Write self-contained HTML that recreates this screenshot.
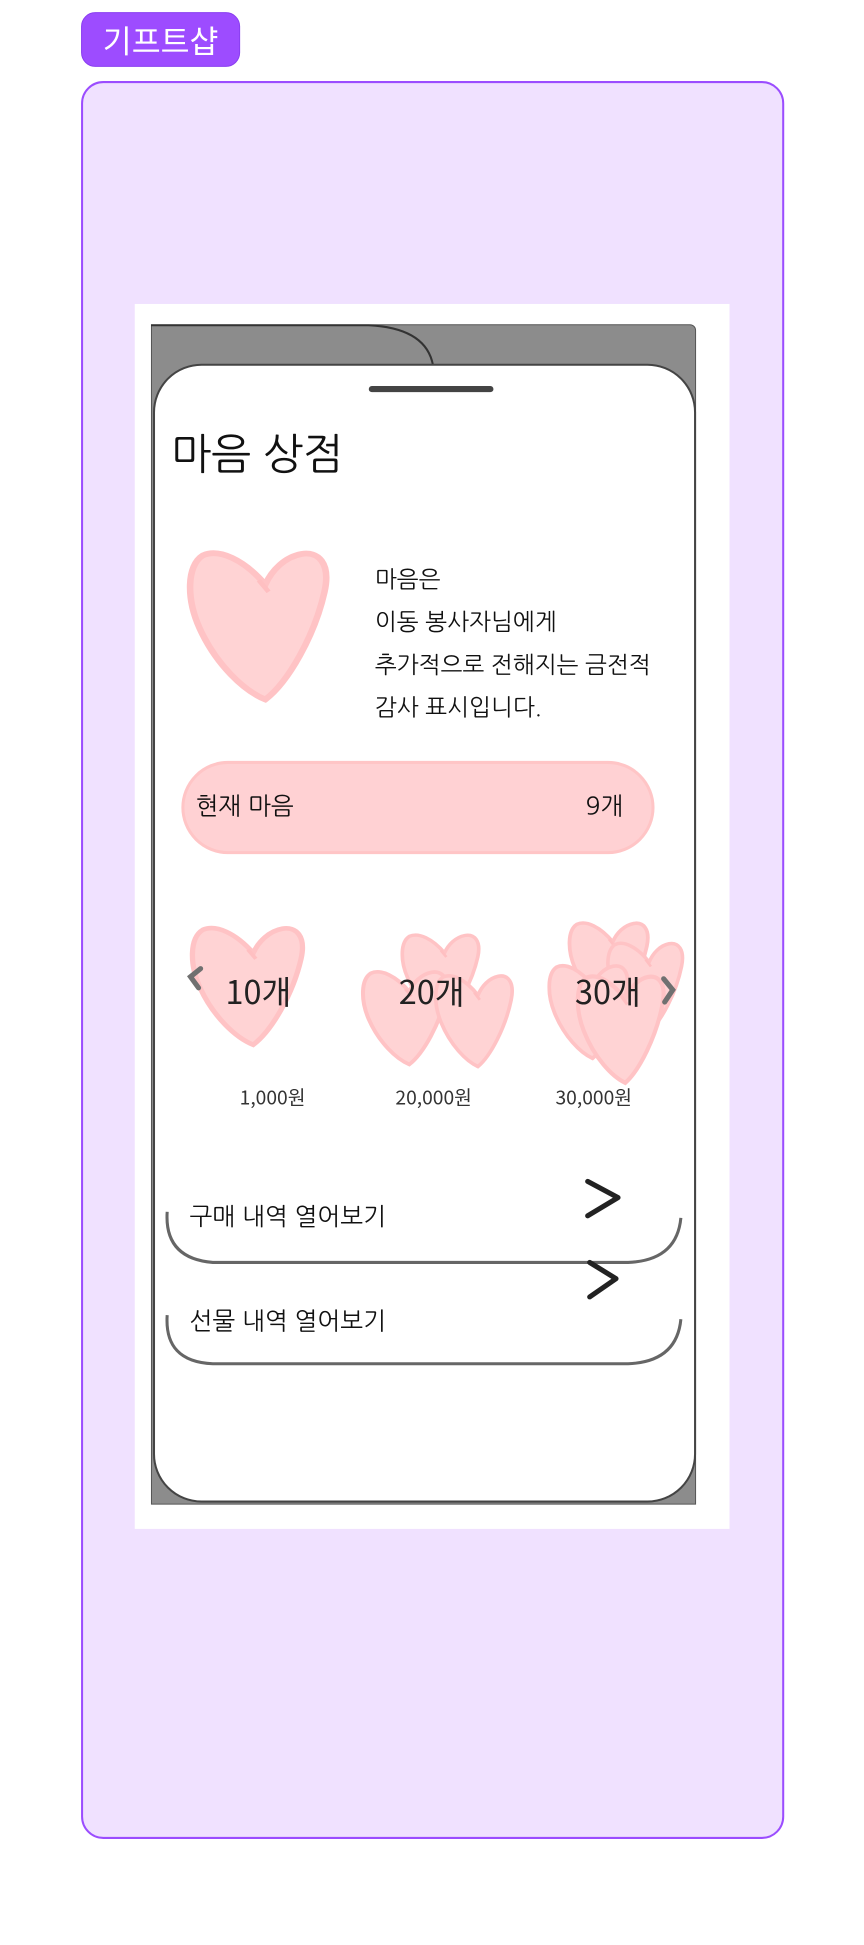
<!DOCTYPE html>
<html><head><meta charset="utf-8"><style>
*{margin:0;padding:0;box-sizing:border-box}
body{width:864px;height:1920px;background:#fff;position:relative;overflow:hidden;font-family:"Liberation Sans","Noto Sans CJK KR",sans-serif}
#w{position:absolute;left:0;top:0;width:864px;height:1920px;transform:scale(1.0132);transform-origin:0 0}
.a{position:absolute}
.hw{font-family:"NanumGothic","Noto Sans CJK KR",sans-serif;color:#111;font-weight:300}
</style></head><body>
<svg width="0" height="0" style="position:absolute"><defs>
<symbol id="h" viewBox="0 0 90 110"><path d="M48 25 C35 8 20 0 10 5 C0 12 0 35 8 55 C18 80 35 98 48 104 C62 92 78 60 84 30 C88 10 80 2 70 4 C60 6 52 15 48 25 Z" fill="#ffd3d4" stroke="#ffc3c5" stroke-width="4"/><path d="M44 22 L50 30" stroke="#ffbfc1" stroke-width="3"/></symbol>
</defs></svg>
<div id="w">
<div class="a" style="left:80px;top:12px;width:157px;height:54px;background:#9d4cff;border:1px solid #8a3ef0;border-radius:14px;color:#fff;font-size:31px;line-height:52px;text-align:center;font-family:'Noto Sans CJK KR',sans-serif">기프트샵</div>

<div class="a" style="left:80px;top:80px;width:694px;height:1735px;background:#f0e1ff;border:2px solid #9b4dff;border-radius:22px"></div>
<div class="a" style="left:133px;top:300px;width:587px;height:1209px;background:#fff"></div>
<div class="a" style="left:149px;top:320px;width:538px;height:1165px;background:#8c8c8c;border:1px solid #555;border-radius:0 6px 0 0"></div>
<svg class="a" style="left:149px;top:320px" width="300" height="45"><path d="M0 1 H215 Q275 4 279 45" fill="none" stroke="#333" stroke-width="2"/></svg>
<div class="a" style="left:151px;top:359px;width:536px;height:1124px;background:#fff;border:2px solid #444;border-radius:48px"></div>
<div class="a" style="left:364px;top:381px;width:123px;height:6px;background:#444;border-radius:3px"></div>

<div class="a hw" style="left:169px;top:423px;font-size:42px">마음 상점</div>

<svg class="a" style="left:184px;top:541px" width="146" height="158" viewBox="0 0 90 110" preserveAspectRatio="none"><use href="#h"/></svg>

<div class="a hw" style="left:370px;top:552px;font-size:23px;line-height:42px">마음은<br>이동 봉사자님에게<br>추가적으로 전해지는 금전적<br>감사 표시입니다.</div>

<div class="a" style="left:179px;top:751px;width:467px;height:92px;background:#ffd1d3;border:3px solid #ffc5c6;border-radius:46px"></div>
<div class="a hw" style="left:193px;top:781px;font-size:24px">현재 마음</div>
<div class="a hw" style="left:578px;top:781px;font-size:24px">9개</div>

<svg class="a" style="left:187px;top:912px" width="118" height="126" viewBox="0 0 90 110" preserveAspectRatio="none"><use href="#h"/></svg>
<svg class="a" style="left:395px;top:920px" width="82" height="90" viewBox="0 0 90 110" preserveAspectRatio="none"><use href="#h"/></svg>
<svg class="a" style="left:356px;top:956px" width="90" height="100" viewBox="0 0 90 110" preserveAspectRatio="none"><use href="#h"/></svg>
<svg class="a" style="left:428px;top:960px" width="82" height="98" viewBox="0 0 90 110" preserveAspectRatio="none"><use href="#h"/></svg>
<svg class="a" style="left:560px;top:908px" width="84" height="95" viewBox="0 0 90 110" preserveAspectRatio="none"><use href="#h"/></svg>
<svg class="a" style="left:598px;top:928px" width="80" height="95" viewBox="0 0 90 110" preserveAspectRatio="none"><use href="#h"/></svg>
<svg class="a" style="left:540px;top:950px" width="84" height="100" viewBox="0 0 90 110" preserveAspectRatio="none"><use href="#h"/></svg>
<svg class="a" style="left:568px;top:960px" width="92" height="115" viewBox="0 0 90 110" preserveAspectRatio="none"><use href="#h"/></svg>

<div class="a" style="left:205px;top:955px;width:100px;text-align:center;font-size:32px;color:#222;font-family:'Noto Sans CJK KR',sans-serif">10개</div>
<div class="a" style="left:376px;top:955px;width:100px;text-align:center;font-size:32px;color:#222;font-family:'Noto Sans CJK KR',sans-serif">20개</div>
<div class="a" style="left:550px;top:955px;width:100px;text-align:center;font-size:32px;color:#222;font-family:'Noto Sans CJK KR',sans-serif">30개</div>

<svg class="a" style="left:183px;top:953px" width="20" height="26"><path d="M15 3 L5 11 L13 22" fill="none" stroke="#707070" stroke-width="5" stroke-linecap="round"/></svg>
<svg class="a" style="left:650px;top:963px" width="20" height="30"><path d="M5 3 L14 14 L6 26" fill="none" stroke="#707070" stroke-width="5" stroke-linecap="round"/></svg>

<div class="a" style="left:209px;top:1069px;width:120px;text-align:center;font-size:19px;color:#333;font-family:'Noto Sans CJK KR',sans-serif">1,000원</div>
<div class="a" style="left:368px;top:1069px;width:120px;text-align:center;font-size:19px;color:#333;font-family:'Noto Sans CJK KR',sans-serif">20,000원</div>
<div class="a" style="left:526px;top:1069px;width:120px;text-align:center;font-size:19px;color:#333;font-family:'Noto Sans CJK KR',sans-serif">30,000원</div>

<svg class="a" style="left:160px;top:1190px" width="520" height="160">
<path d="M5 6 Q2 52 50 56 H460 Q508 54 512 12" fill="none" stroke="#666" stroke-width="3"/>
<path d="M5 108 Q2 154 50 156 H460 Q508 154 512 112" fill="none" stroke="#666" stroke-width="3"/>
</svg>
<div class="a hw" style="left:187px;top:1186px;font-size:24px">구매 내역 열어보기</div>
<div class="a hw" style="left:187px;top:1289px;font-size:24px">선물 내역 열어보기</div>
<svg class="a" style="left:574px;top:1162px" width="44" height="130">
<path d="M6 4 L36 20 L6 38" fill="none" stroke="#222" stroke-width="5" stroke-linecap="round" stroke-linejoin="round"/>
<path d="M8 84 L34 100 L8 118" fill="none" stroke="#222" stroke-width="5" stroke-linecap="round" stroke-linejoin="round"/>
</svg>
</div>
</body></html>
